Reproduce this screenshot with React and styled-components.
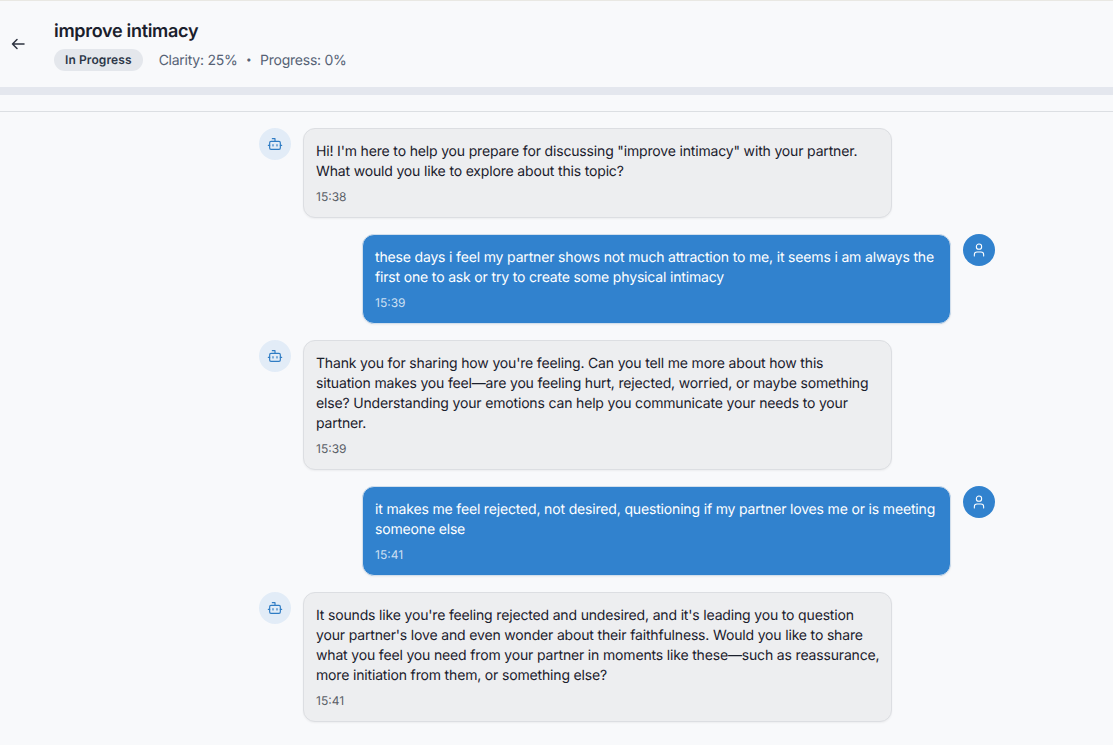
import React from "react";
import styled, { createGlobalStyle } from "styled-components";
import { Bot, User } from "lucide-react";

const GlobalStyle = createGlobalStyle`
  * {
    box-sizing: border-box;
  }

  html, body {
    margin: 0;
    height: 100%;
    overflow: hidden;
    background: #f8f9fb;
    font-family: Inter, "Liberation Sans", sans-serif;
    text-rendering: geometricPrecision;
  }
`;

const messages = [
  {
    id: 1,
    from: "bot",
    time: "15:38",
    lines: [
      `Hi! I'm here to help you prepare for discussing "improve intimacy" with your partner.`,
      "What would you like to explore about this topic?",
    ],
  },
  {
    id: 2,
    from: "user",
    time: "15:39",
    lines: [
      "these days i feel my partner shows not much attraction to me, it seems i am always the",
      "first one to ask or try to create some physical intimacy",
    ],
  },
  {
    id: 3,
    from: "bot",
    time: "15:39",
    lines: [
      "Thank you for sharing how you're feeling. Can you tell me more about how this",
      "situation makes you feel—are you feeling hurt, rejected, worried, or maybe something",
      "else? Understanding your emotions can help you communicate your needs to your",
      "partner.",
    ],
  },
  {
    id: 4,
    from: "user",
    time: "15:41",
    lines: [
      "it makes me feel rejected, not desired, questioning if my partner loves me or is meeting",
      "someone else",
    ],
  },
  {
    id: 5,
    from: "bot",
    time: "15:41",
    lines: [
      "It sounds like you're feeling rejected and undesired, and it's leading you to question",
      "your partner's love and even wonder about their faithfulness. Would you like to share",
      "what you feel you need from your partner in moments like these—such as reassurance,",
      "more initiation from them, or something else?",
    ],
  },
];

const App = () => {
  return (
    <Page>
      <GlobalStyle />
      <Header>
        <BackButton>
          <svg width="14" height="12" viewBox="0 0 14 12" fill="none">
            <path
              d="M13 6H1.5M6 1.5L1.5 6L6 10.5"
              stroke="currentColor"
              strokeWidth="1.5"
              strokeLinecap="round"
              strokeLinejoin="round"
            />
          </svg>
        </BackButton>
        <HeaderText>
          <Title>improve intimacy</Title>
          <MetaRow>
            <StatusBadge>In Progress</StatusBadge>
            <MetaText>Clarity: 25%</MetaText>
            <MetaDot>•</MetaDot>
            <MetaText>Progress: 0%</MetaText>
          </MetaRow>
        </HeaderText>
      </Header>
      <Track />
      <Spacer />
      <Thread>
        {messages.map((m) => {
          const isUser = m.from === "user";
          return (
            <Row key={m.id} $user={isUser}>
              {!isUser && (
                <Avatar>
                  <Bot size={16} strokeWidth={1.75} />
                </Avatar>
              )}
              <Bubble $user={isUser}>
                <BubbleText>
                  {m.lines.map((line) => (
                    <Line key={line}>{line}</Line>
                  ))}
                </BubbleText>
                <Time $user={isUser}>{m.time}</Time>
              </Bubble>
              {isUser && (
                <Avatar $user>
                  <User size={16} strokeWidth={1.6} />
                </Avatar>
              )}
            </Row>
          );
        })}
      </Thread>
    </Page>
  );
};

const Page = styled.div`
  height: 745px;
  overflow: hidden;
  background: #f8f9fb;
  border-top: 1px solid #e9e8e3;
`;

const Header = styled.header`
  display: flex;
  align-items: center;
  height: 86px;
  padding-left: 11px;
`;

const BackButton = styled.div`
  display: flex;
  align-items: center;
  width: 14px;
  color: #2d3340;
`;

const HeaderText = styled.div`
  display: flex;
  flex-direction: column;
  gap: 3px;
  padding-top: 1px;
  margin-left: 29px;
`;

const Title = styled.h1`
  margin: 0;
  font-size: 18px;
  line-height: 28px;
  font-weight: 600;
  letter-spacing: -0.3px;
  color: #1a202c;
`;

const MetaRow = styled.div`
  display: flex;
  align-items: center;
  height: 22px;
`;

const StatusBadge = styled.span`
  display: inline-flex;
  align-items: center;
  height: 22px;
  padding: 0 11px 1px;
  margin-right: 16px;
  border-radius: 11px;
  background: #e4e7ec;
  color: #2d3748;
  font-size: 12px;
  font-weight: 600;
  letter-spacing: 0.1px;
`;

const MetaText = styled.span`
  font-size: 14px;
  letter-spacing: -0.25px;
  color: #566275;
`;

const MetaDot = styled.span`
  margin: 0 8.5px;
  font-size: 10px;
  color: #566275;
`;

const Track = styled.div`
  height: 8px;
  background: #e4e7ee;
`;

const Spacer = styled.div`
  height: 17px;
  border-bottom: 1px solid #dcdfe3;
`;

const Thread = styled.main`
  display: flex;
  flex-direction: column;
  gap: 16px;
  width: 736px;
  margin: 16px 0 0 259px;
`;

const Row = styled.div`
  display: flex;
  align-items: flex-start;
  gap: 12px;
  justify-content: ${(p) => (p.$user ? "flex-end" : "flex-start")};
`;

const Avatar = styled.div`
  display: flex;
  align-items: center;
  justify-content: center;
  flex: none;
  width: 32px;
  height: 32px;
  border-radius: 50%;
  background: ${(p) => (p.$user ? "#3182ce" : "#e2ecf7")};
  color: ${(p) => (p.$user ? "#ffffff" : "#2f7cc4")};
`;

const Bubble = styled.div`
  width: 589px;
  padding: 13px 12px 12px;
  border-radius: 12px;
  border: 1px solid ${(p) => (p.$user ? "#d2dfec" : "#dcdee2")};
  background: ${(p) => (p.$user ? "#3182ce" : "#edeef0")};
  color: ${(p) => (p.$user ? "#ffffff" : "#1a202c")};
  box-shadow: 0 1px 2px rgba(0, 0, 0, 0.05);
`;

const BubbleText = styled.div`
  font-size: 14px;
  line-height: 20px;
  letter-spacing: -0.165px;
`;

const Line = styled.div`
  white-space: nowrap;
`;

const Time = styled.div`
  margin-top: 7px;
  font-size: 12px;
  line-height: 16px;
  color: ${(p) => (p.$user ? "rgba(255, 255, 255, 0.75)" : "#5a5f68")};
`;

export default App;
